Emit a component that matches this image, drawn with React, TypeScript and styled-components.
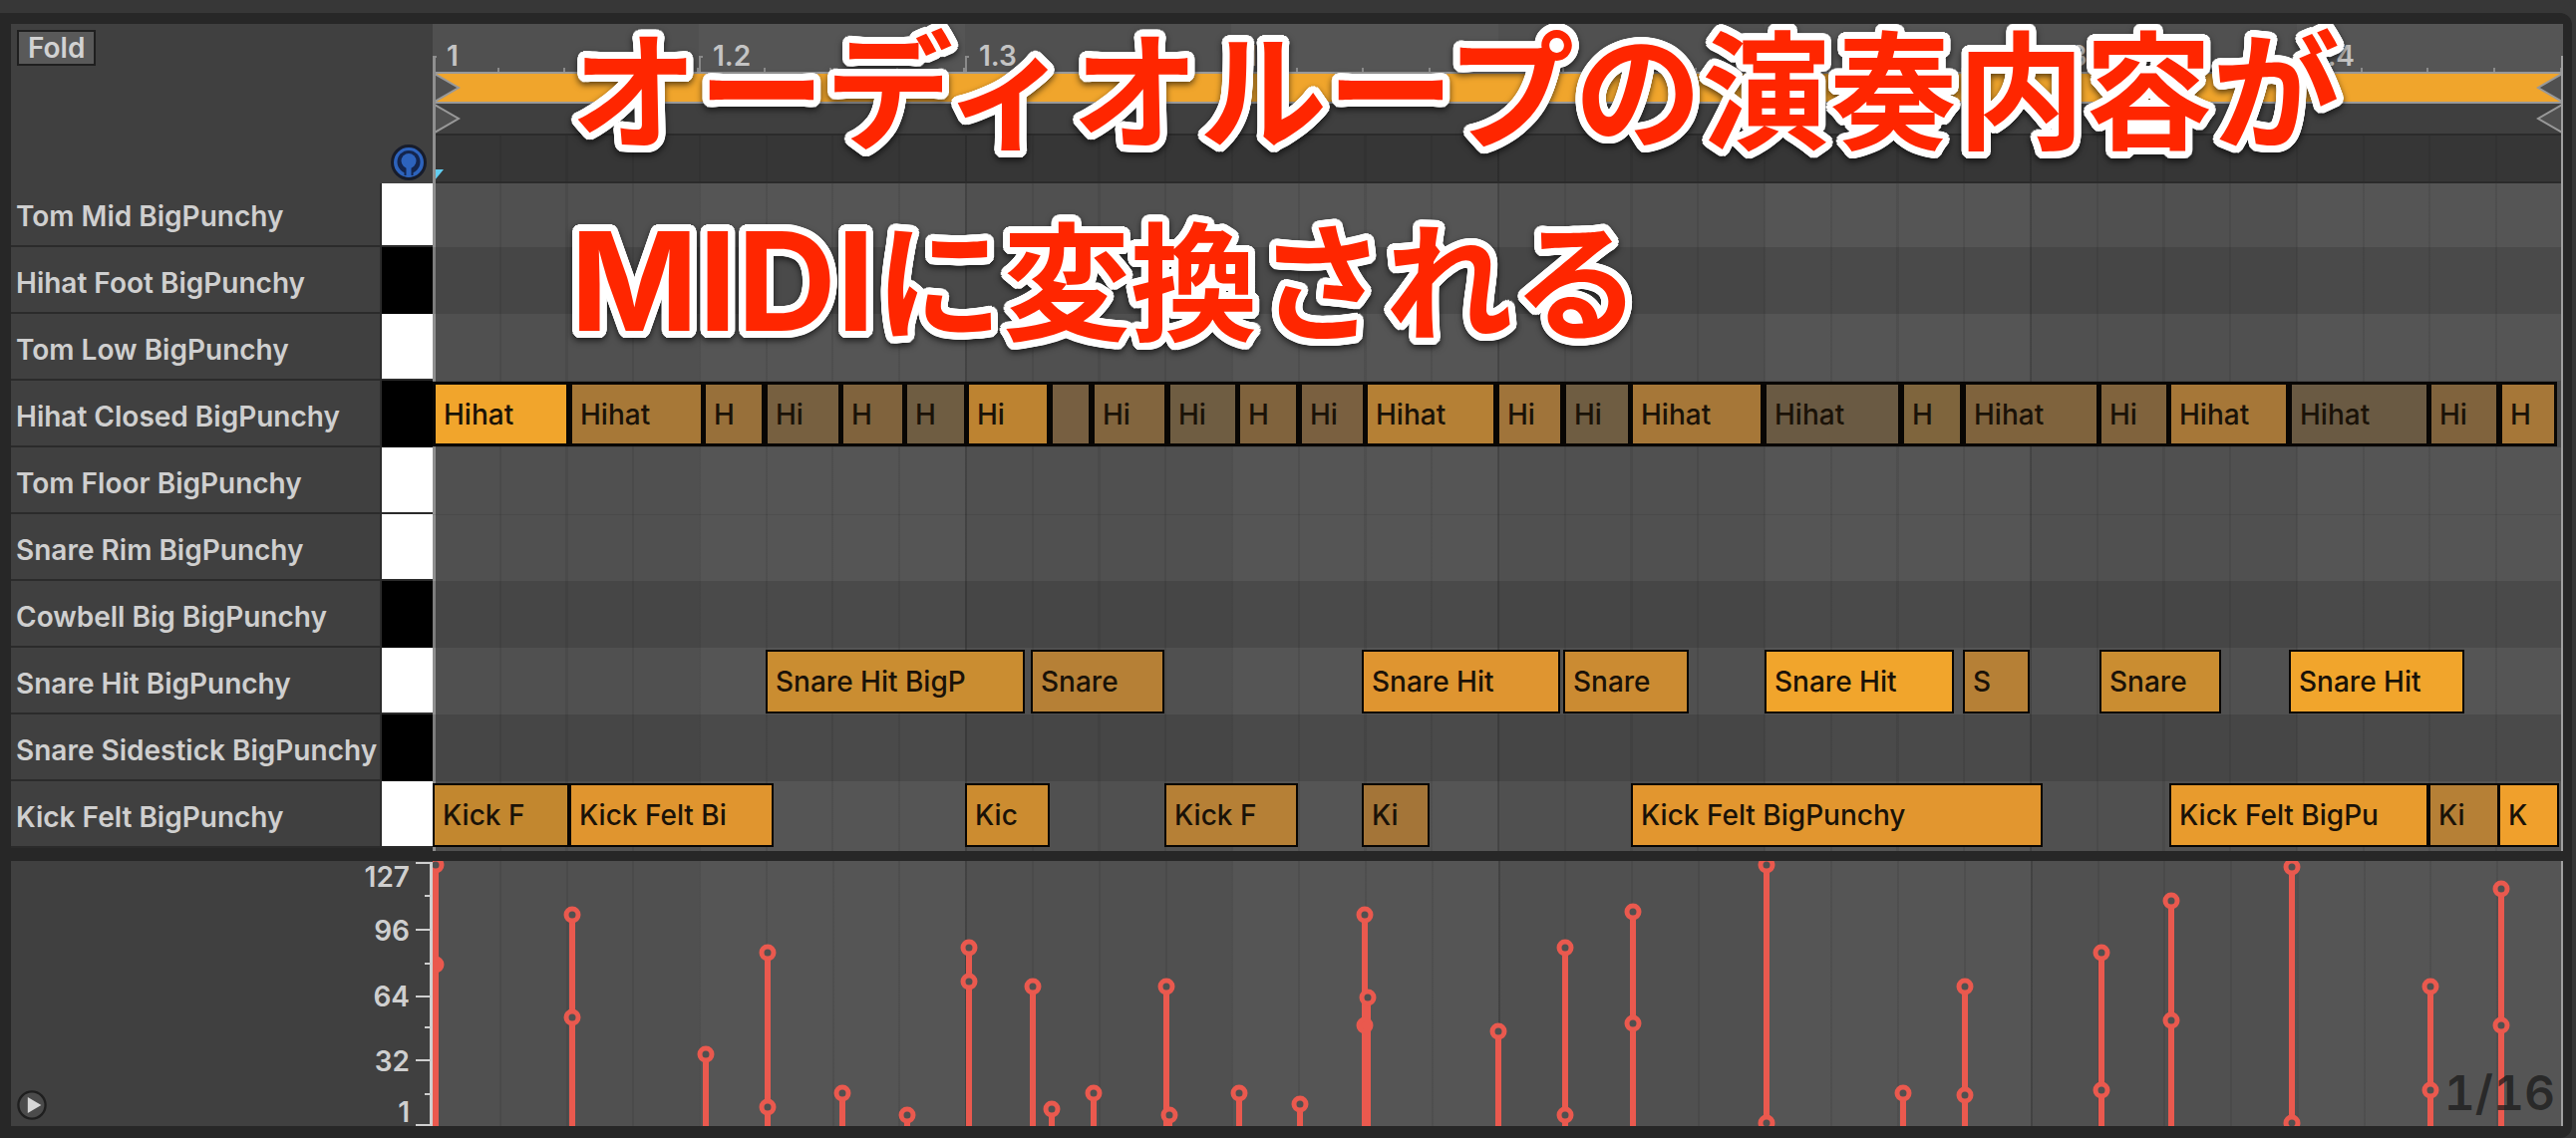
import React from "react";
import styled, { createGlobalStyle } from "styled-components";

const TIMELINE = 2136;
const pct = (v: number) => `${(v / TIMELINE) * 100}%`;

const OUTLINE = Array.from({ length: 32 }, (_, i) => {
  const a = (i / 32) * Math.PI * 2;
  return `${(Math.cos(a) * 7).toFixed(1)}px ${(Math.sin(a) * 7).toFixed(1)}px 0 #fff`;
}).join(", ");

type Note = { start: number; end: number; text: string; color: string };
type Pad = { name: string; black?: boolean; dense?: boolean; notes?: Note[] };

const note = (start: number, end: number, text: string, color: string): Note => ({
  start,
  end,
  text,
  color,
});

const PADS: Pad[] = [
  { name: "Tom Mid BigPunchy" },
  { name: "Hihat Foot BigPunchy", black: true },
  { name: "Tom Low BigPunchy" },
  {
    name: "Hihat Closed BigPunchy",
    black: true,
    dense: true,
    notes: [
      note(0, 137, "Hihat", "#f1a52c"),
      note(137, 272, "Hihat", "#a77837"),
      note(271, 333, "H", "#98703a"),
      note(333, 410, "Hi", "#776040"),
      note(409, 474, "H", "#80633d"),
      note(473, 536, "H", "#6f5d42"),
      note(535, 619, "Hi", "#bd8331"),
      note(619, 661, "", "#775f41"),
      note(661, 737, "Hi", "#82653e"),
      note(737, 808, "Hi", "#6f5d42"),
      note(807, 869, "H", "#80633d"),
      note(869, 936, "Hi", "#7a6040"),
      note(935, 1067, "Hihat", "#b58035"),
      note(1067, 1134, "Hi", "#a0743a"),
      note(1134, 1202, "Hi", "#6f5d42"),
      note(1201, 1335, "Hihat", "#a67738"),
      note(1335, 1473, "Hihat", "#6a5a43"),
      note(1473, 1535, "H", "#7f653d"),
      note(1535, 1672, "Hihat", "#7f633d"),
      note(1671, 1742, "Hi", "#80633d"),
      note(1741, 1862, "Hihat", "#a67738"),
      note(1862, 2003, "Hihat", "#6a5a43"),
      note(2002, 2073, "Hi", "#80633d"),
      note(2073, 2131, "H", "#a67738"),
    ],
  },
  { name: "Tom Floor BigPunchy" },
  { name: "Snare Rim BigPunchy" },
  { name: "Cowbell Big BigPunchy", black: true },
  {
    name: "Snare Hit BigPunchy",
    notes: [
      note(334, 594, "Snare Hit BigP", "#ca8d31"),
      note(600, 734, "Snare", "#b68036"),
      note(932, 1131, "Snare Hit", "#df9530"),
      note(1134, 1260, "Snare", "#cb8b32"),
      note(1336, 1526, "Snare Hit", "#f1a52c"),
      note(1535, 1602, "S", "#b68036"),
      note(1672, 1794, "Snare", "#ca8d31"),
      note(1862, 2038, "Snare Hit", "#f1a52c"),
    ],
  },
  { name: "Snare Sidestick BigPunchy", black: true },
  {
    name: "Kick Felt BigPunchy",
    notes: [
      note(0, 137, "Kick F", "#c2872f"),
      note(137, 342, "Kick Felt Bi", "#e0952f"),
      note(534, 619, "Kic", "#cc8c30"),
      note(734, 868, "Kick F", "#b68036"),
      note(932, 1000, "Ki", "#a47538"),
      note(1202, 1615, "Kick Felt BigPunchy", "#e2962f"),
      note(1742, 2002, "Kick Felt BigPu", "#e89b2d"),
      note(2002, 2073, "Ki", "#b68036"),
      note(2072, 2133, "K", "#f0a02c"),
    ],
  },
];

const BEATS = ["1", "1.2", "1.3", "1.4", "2", "2.2", "2.3", "2.4"];

type Stem = { x: number; heads: number[]; solid?: number[] };
const STEMS: Stem[] = [
  { x: 3, heads: [4], solid: [104] },
  { x: 140, heads: [54, 157] },
  { x: 274, heads: [194] },
  { x: 336, heads: [92, 247] },
  { x: 411, heads: [233] },
  { x: 476, heads: [255] },
  { x: 538, heads: [87, 121] },
  { x: 602, heads: [126] },
  { x: 621, heads: [249] },
  { x: 663, heads: [233] },
  { x: 736, heads: [126] },
  { x: 739, heads: [255] },
  { x: 809, heads: [233] },
  { x: 870, heads: [244] },
  { x: 935, heads: [54], solid: [165] },
  { x: 938, heads: [137] },
  { x: 1069, heads: [171] },
  { x: 1136, heads: [87, 255] },
  { x: 1204, heads: [51, 163] },
  { x: 1338, heads: [4, 263] },
  { x: 1475, heads: [233] },
  { x: 1537, heads: [126, 235] },
  { x: 1674, heads: [92, 230] },
  { x: 1744, heads: [40, 160] },
  { x: 1865, heads: [6, 263] },
  { x: 2004, heads: [126, 230] },
  { x: 2075, heads: [28, 165] },
];

const GlobalStyle = createGlobalStyle`
  *, *::before, *::after { box-sizing: border-box; }
  body {
    margin: 0;
    background: #373737;
    font-family: Inter, "Noto Sans CJK JP", sans-serif;
    font-size: 28px;
    font-weight: 600;
    line-height: 34px;
    color: #cfcfcf;
  }
`;

const Page = styled.main`
  padding: 13px 4px 0 0;
`;

const Frame = styled.div`
  background: #272727;
  border-radius: 0 12px 12px 0;
  padding: 11px 9px 12px 11px;
`;

const Editor = styled.section`
  position: relative;
  display: grid;
  grid-template-columns: 423px minmax(0, 1fr);
  overflow: hidden;
`;

const SideHeader = styled.div`
  height: 160px;
  padding: 6px;
  padding-bottom: 3px;
  background: #404040;
  display: flex;
  flex-direction: column;
  justify-content: space-between;
`;

const FoldButton = styled.button`
  align-self: flex-start;
  height: 36px;
  padding: 0 9px;
  border: 2px solid #1f1f1f;
  background: #595959;
  color: #d2d2d2;
  font: inherit;
  line-height: 32px;
`;

const RoundButton = styled.button<{ $size: number }>`
  width: ${(p) => p.$size}px;
  height: ${(p) => p.$size}px;
  padding: 0;
  border: 0;
  background: none;
  display: block;

  svg {
    display: block;
    width: 100%;
    height: 100%;
  }
`;

const PreviewButton = styled(RoundButton)`
  align-self: flex-end;
`;

const PadList = styled.ul`
  margin: 0;
  padding: 0;
  list-style: none;
`;

const PadRow = styled.li`
  display: grid;
  grid-template-columns: minmax(0, 1fr) 51px;
  column-gap: 2px;
  height: 67px;
  background: #2b2b2b;

  &:first-child {
    height: 64px;
  }
`;

const PadName = styled.div`
  display: flex;
  align-items: flex-end;
  padding: 0 0 12px 5px;
  margin-bottom: 2px;
  background: #404040;
  white-space: nowrap;
`;

const PadKey = styled.div<{ $black?: boolean }>`
  margin-bottom: ${(p) => (p.$black ? 0 : 2)}px;
  background: ${(p) => (p.$black ? "#000" : "#fff")};
`;

const beatShade =
  "repeating-linear-gradient(90deg, #505050 0 12.5%, #555 12.5% 25%)";
const gridLines =
  "repeating-linear-gradient(90deg, rgba(0,0,0,.08) 0 2px, transparent 2px 3.125%), repeating-linear-gradient(90deg, rgba(0,0,0,.1) 0 2px, transparent 2px 25%)";

const Timeline = styled.div`
  position: relative;
  padding-right: 1px;
  background: ${beatShade};

  &::before,
  &::after {
    content: "";
    position: absolute;
    top: 32px;
    bottom: 0;
    background: #8f8f8f;
  }
  &::before {
    left: 0;
    width: 3px;
  }
  &::after {
    right: 0;
    width: 2px;
    background: #a0a0a0;
  }
`;

const Ruler = styled.div`
  display: grid;
  grid-template-columns: repeat(8, minmax(0, 1fr));
  height: 48px;
`;

const Beat = styled.div`
  display: flex;
  align-items: flex-end;
  gap: 10px;
  color: #c4c4c4;
  background: repeating-linear-gradient(90deg, transparent 0 calc(25% - 2px), #8a8a8a calc(25% - 2px) 25%)
    left bottom / 100% 4px no-repeat;
`;

const BeatTick = styled.span`
  width: 4px;
  height: 16px;
  border: solid #8a8a8a;
  border-width: 2px 0 0 2px;
`;

const BeatLabel = styled.span`
  line-height: 28px;
  padding-bottom: 2px;
`;

const LoopBar = styled.div`
  display: flex;
  justify-content: space-between;
  height: 32px;
  border: solid #999;
  border-width: 2px 0;
  background: #f0a52c;
  padding-left: 2px;
`;

const MarkerStrip = styled.div`
  display: flex;
  justify-content: space-between;
  height: 30px;
  padding-left: 2px;
  background: #3f3f3f;
`;

const Handle = styled.svg`
  display: block;
  width: 26px;
  height: 100%;
`;

const ScrubStrip = styled.div`
  display: flex;
  align-items: flex-end;
  height: 50px;
  padding: 0 0 1px 2px;
  border: solid #2b2b2b;
  border-width: 2px 0;
  background: ${gridLines}, #363636;
`;

const InsertMarker = styled.svg`
  display: block;
  width: 9px;
  height: 12px;
`;

const Lanes = styled.div`
  padding-bottom: 3px;
  background: ${gridLines};
`;

const Lane = styled.div<{ $black?: boolean; $divided?: boolean }>`
  position: relative;
  height: 67px;
  background: ${(p) => (p.$black ? "rgba(0,0,0,.12)" : "none")};
  border-top: ${(p) => (p.$divided ? "1px solid rgba(0,0,0,.08)" : "0")};

  &:first-child {
    height: 64px;
  }
`;

const NoteBlock = styled.div<{ $color: string; $dense?: boolean }>`
  position: absolute;
  z-index: 1;
  top: ${(p) => (p.$dense ? 1 : 2)}px;
  bottom: 1px;
  display: flex;
  align-items: center;
  padding-left: 8px;
  border: ${(p) => (p.$dense ? 3 : 2)}px solid #080604;
  background: ${(p) => p.$color};
  color: #1a1208;
  font-weight: 500;
  white-space: nowrap;
  overflow: hidden;
`;

const VelocityPanel = styled.section`
  display: grid;
  grid-template-columns: 423px minmax(0, 1fr);
  height: 266px;
  margin-top: 10px;
`;

const VelocitySide = styled.div`
  display: flex;
  align-items: flex-end;
  justify-content: space-between;
  padding-left: 6px;
  background: #404040;
`;

const PlaySlot = styled.div`
  padding-bottom: 6px;
`;

const Scale = styled.svg`
  display: block;
  width: 90px;
  height: 266px;
  fill: #cfcfcf;
  overflow: visible;
`;

const VelocityLane = styled.div`
  position: relative;
  padding-right: 1px;
  background: ${gridLines}, ${beatShade};

  &::after {
    content: "";
    position: absolute;
    top: 0;
    right: 0;
    bottom: 0;
    width: 2px;
    background: #a0a0a0;
  }
`;

const StemChart = styled.svg`
  display: block;
  width: 100%;
  height: 266px;
  stroke: #ea594e;
  fill: #505050;
`;

const GridSize = styled.div`
  position: absolute;
  right: 8px;
  bottom: 4px;
  font-size: 48px;
  line-height: 58px;
  font-variant-numeric: tabular-nums;
  color: rgba(24, 24, 24, 0.72);
`;

const Caption = styled.h1`
  position: absolute;
  z-index: 2;
  top: 0;
  left: 561px;
  margin: 0;
  display: flex;
  flex-direction: column;
  gap: 70px;
  font-family: "Noto Sans CJK JP", sans-serif;
  font-size: 128px;
  line-height: 122px;
  font-weight: 700;
  color: #ff2600;
  white-space: nowrap;
  text-shadow: ${OUTLINE};
  filter: drop-shadow(0 3px 3px rgba(0, 0, 0, 0.6));
`;

const Latin = styled.span`
  font-family: Inter, sans-serif;
  font-size: 138px;
  line-height: 0;
`;

function HeadphoneIcon() {
  return (
    <svg viewBox="0 0 36 36" aria-hidden="true">
      <circle cx="18" cy="18" r="16.5" fill="#2d63bd" stroke="#171c2b" strokeWidth="3" />
      <circle cx="18" cy="17.5" r="11.5" fill="#14254d" />
      <rect x="13.5" y="24" width="9" height="7" fill="#14254d" />
      <circle cx="18" cy="16.5" r="7.5" fill="#2d63bd" />
      <rect x="15.5" y="21" width="5" height="11.5" fill="#2d63bd" />
    </svg>
  );
}

function PlayIcon() {
  return (
    <svg viewBox="0 0 32 32" aria-hidden="true">
      <circle cx="16" cy="16" r="14.5" fill="#4b4b4b" stroke="#1f1f1f" strokeWidth="2.5" />
      <path d="M11.5 7.5 L26 16 L11.5 24.5 Z" fill="#d6d6d6" />
    </svg>
  );
}

function VelocityScale() {
  const major: [number, string, number][] = [
    [2, "127", 26],
    [69, "96", 80],
    [136, "64", 146],
    [200, "32", 211],
    [265, "1", 262],
  ];
  const minor = [35, 103, 167, 234];
  return (
    <Scale viewBox="0 0 90 266">
      {major.map(([y, label, base]) => (
        <React.Fragment key={label}>
          <rect x={73} y={y - 1} width={16} height={2} />
          <text x={67} y={base} textAnchor="end">
            {label}
          </text>
        </React.Fragment>
      ))}
      {minor.map((y) => (
        <rect key={y} x={82} y={y - 1} width={7} height={2} />
      ))}
      <rect x={87} y={1} width={3} height={265} />
    </Scale>
  );
}

function Stems() {
  return (
    <StemChart>
      {STEMS.map((s) => {
        const all = [...s.heads, ...(s.solid ?? [])];
        const top = Math.min(...all);
        return (
          <g key={s.x}>
            <line x1={pct(s.x)} x2={pct(s.x)} y1={top + 6} y2={266} strokeWidth={6} />
            {s.heads.map((y) => (
              <circle key={y} cx={pct(s.x)} cy={y} r={6} strokeWidth={5} />
            ))}
            {s.solid?.map((y) => (
              <circle key={y} cx={pct(s.x)} cy={y} r={6} strokeWidth={5} fill="#ea594e" />
            ))}
          </g>
        );
      })}
    </StemChart>
  );
}

export default function App() {
  return (
    <Page>
      <GlobalStyle />
      <Frame>
        <Editor>
          <div>
            <SideHeader>
              <FoldButton type="button">Fold</FoldButton>
              <PreviewButton type="button" $size={36} aria-label="Preview">
                <HeadphoneIcon />
              </PreviewButton>
            </SideHeader>
            <PadList>
              {PADS.map((p) => (
                <PadRow key={p.name}>
                  <PadName>{p.name}</PadName>
                  <PadKey $black={p.black} />
                </PadRow>
              ))}
            </PadList>
          </div>
          <Timeline>
            <Ruler>
              {BEATS.map((b) => (
                <Beat key={b}>
                  <BeatTick />
                  <BeatLabel>{b}</BeatLabel>
                </Beat>
              ))}
            </Ruler>
            <LoopBar>
              <Handle viewBox="0 0 26 28" preserveAspectRatio="none">
                <path d="M0 0 L24 14 L0 28 Z" fill="#505050" stroke="#999" strokeWidth="2" />
              </Handle>
              <Handle viewBox="0 0 26 28" preserveAspectRatio="none">
                <path d="M26 0 L2 14 L26 28 Z" fill="#505050" stroke="#999" strokeWidth="2" />
              </Handle>
            </LoopBar>
            <MarkerStrip>
              <Handle viewBox="0 0 26 30">
                <path d="M0 1 L24 15 L0 29 Z" fill="#505050" stroke="#999" strokeWidth="2" />
              </Handle>
              <Handle viewBox="0 0 26 30">
                <path d="M26 1 L2 15 L26 29" fill="#505050" stroke="#999" strokeWidth="2" />
              </Handle>
            </MarkerStrip>
            <ScrubStrip>
              <InsertMarker viewBox="0 0 9 12">
                <path d="M0 1 H9 L0 12 Z" fill="#62cdf0" />
              </InsertMarker>
            </ScrubStrip>
            <Lanes>
              {PADS.map((p, i) => (
                <Lane
                  key={p.name}
                  $black={p.black}
                  $divided={i > 0 && !p.black && !PADS[i - 1].black}
                >
                  {p.notes?.map((n) => (
                    <NoteBlock
                      key={n.start}
                      $color={n.color}
                      $dense={p.dense}
                      style={{ left: pct(n.start), width: pct(n.end - n.start) }}
                    >
                      {n.text}
                    </NoteBlock>
                  ))}
                </Lane>
              ))}
            </Lanes>
          </Timeline>
          <Caption>
            <span>オーディオループの演奏内容が</span>
            <span>
              <Latin>MIDI</Latin>に変換される
            </span>
          </Caption>
        </Editor>
        <VelocityPanel>
          <VelocitySide>
            <PlaySlot>
              <RoundButton type="button" $size={30} aria-label="Play">
                <PlayIcon />
              </RoundButton>
            </PlaySlot>
            <VelocityScale />
          </VelocitySide>
          <VelocityLane>
            <Stems />
            <GridSize>1/16</GridSize>
          </VelocityLane>
        </VelocityPanel>
      </Frame>
    </Page>
  );
}
